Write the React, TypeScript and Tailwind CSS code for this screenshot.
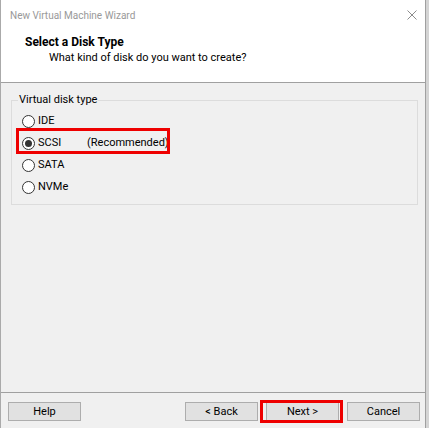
const font = { fontFamily: 'Roboto, "Noto Sans", "Liberation Sans", sans-serif' };

export default function App() {
  const options = ["IDE", "SCSI", "SATA", "NVMe"];
  const selected = "SCSI";

  return (
    <div className="flex w-[429px] h-[428px] bg-white text-[11px] text-black" style={font}>
      <div className="flex flex-1 flex-col border-l border-[#aaaaaa]">
        {/* title bar */}
        <div className="flex h-[30px] items-center justify-between bg-white pl-[9px] pr-[8px]">
          <span className="text-[10px] text-[#999999]">New Virtual Machine Wizard</span>
          <svg width="10" height="10" viewBox="0 0 10 10" className="text-[#8c8c8c]">
            <path d="M0.5 0.5 L9.5 9.5 M9.5 0.5 L0.5 9.5" stroke="currentColor" strokeWidth="1" />
          </svg>
        </div>

        {/* header */}
        <div className="h-[53px] border-b border-[#a0a0a0] bg-white pt-[4px]">
          <h1 className="pl-[24px] text-[12px] font-bold leading-[16px]">Select a Disk Type</h1>
          <p className="pl-[48px] leading-[16px]">What kind of disk do you want to create?</p>
        </div>

        {/* content */}
        <div className="flex flex-1 flex-col bg-[#f0f0f0] pl-[10px] pr-[7px] pt-[9px]">
          <fieldset className="border border-[#dcdcdc] pb-[6px] pl-[10px]">
            <legend className="-ml-[4px] px-[1px] leading-[16px]">Virtual disk type</legend>
            <div className="mt-[2px] flex flex-col">
              {options.map((opt) => (
                <div key={opt} className="relative flex h-[22px] items-center">
                  <span className="flex h-[13px] w-[13px] items-center justify-center rounded-full border border-[#333333] bg-white">
                    {opt === selected && <span className="h-[7px] w-[7px] rounded-full bg-[#333333]" />}
                  </span>
                  <span className="ml-[3px] w-[49px]">{opt}</span>
                  {opt === selected && <span>(Recommended)</span>}
                  {opt === selected && (
                    <span className="pointer-events-none absolute -left-[6px] -top-[4px] h-[26px] w-[154px] border-[3px] border-[#ee0000]" />
                  )}
                </div>
              ))}
            </div>
          </fieldset>
        </div>

        {/* footer */}
        <div className="flex h-[36px] items-start border-t border-[#a0a0a0] bg-[#f0f0f0] pl-[7px] pr-[5px] pt-[9px]">
          <button className="h-[19px] w-[73px] border border-[#adadad] bg-[#e1e1e1] leading-[16px]">Help</button>
          <div className="flex-1" />
          <button className="h-[19px] w-[73px] border border-[#adadad] bg-[#e1e1e1] leading-[16px]">&lt; Back</button>
          <div className="relative ml-[8px]">
            <button className="h-[19px] w-[73px] border border-[#adadad] bg-[#e1e1e1] leading-[16px]">Next &gt;</button>
            <span className="pointer-events-none absolute -bottom-[2px] -left-[6px] -right-[4px] -top-[2px] border-[3px] border-[#ee0000]" />
          </div>
          <button className="ml-[8px] h-[19px] w-[73px] border border-[#adadad] bg-[#e1e1e1] leading-[16px]">Cancel</button>
        </div>
      </div>
      <div className="w-[4px] border-l border-[#a0a0a0] bg-[#d4d4d4]" />
    </div>
  );
}
